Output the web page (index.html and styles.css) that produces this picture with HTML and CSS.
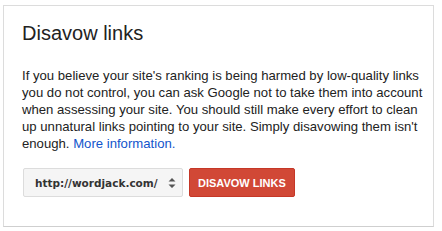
FILE: index.html
```html
<!DOCTYPE html>
<html>
<head>
<meta charset="utf-8">
<link rel="stylesheet" href="styles.css">
</head>
<body>
<div class="card">
  <h1 class="title">Disavow links</h1>
  <p class="desc">If you believe your site's ranking is being harmed by low-quality links you do not control, you can ask Google not to take them into account when assessing your site. You should still make every effort to clean up unnatural links pointing to your site. Simply disavowing them isn't enough. <a class="more" href="#">More information.</a></p>
  <div class="actions">
    <div class="select">
      <span class="select-text">http://wordjack.com/</span>
      <svg class="arrows" width="8" height="12" viewBox="0 0 8 12"><path d="M4 1 L7.5 4.5 L0.5 4.5 Z M4 11 L7.5 7.5 L0.5 7.5 Z" fill="#555"/></svg>
    </div>
    <button class="btn">DISAVOW LINKS</button>
  </div>
</div>
</body>
</html>
```
FILE: styles.css
```css
html, body { margin: 0; padding: 0; background: #fff; }
body { font-family: Arial, "Liberation Sans", sans-serif; color: #222; }
.card {
  margin: 5px 0 0 3px;
  width: 431px;
  height: 222px;
  box-sizing: border-box;
  border: 1px solid #dcdcdc;
  border-bottom-color: #cfcfcf;
  padding: 15px 0 0 18px;
}
.title {
  margin: 0;
  font-size: 20px;
  font-weight: normal;
  line-height: 24px;
  color: #222;
}
.desc {
  margin: 22px 0 0 0;
  font-size: 13.15px;
  line-height: 17px;
  color: #222;
  width: 402px;
}
.more { color: #15c; text-decoration: none; }
.actions { display: flex; align-items: center; gap: 6px; margin-top: 16px; margin-left: 1px; }
.select {
  display: flex; align-items: center; justify-content: space-between;
  width: 160px; height: 29px; box-sizing: border-box;
  padding: 0 6px 0 11px;
  background: #f5f5f5; border: 1px solid #dcdcdc; border-radius: 2px;
}
.select-text { font-family: "DejaVu Sans", sans-serif; font-weight: bold; font-size: 10.5px; color: #333; }
.btn {
  height: 29px; padding: 0 8px; border: 1px solid #c53727; border-radius: 2px;
  background: #d14836; color: #fff; font-family: Arial, "Liberation Sans", sans-serif;
  font-weight: bold; font-size: 11px; box-sizing: border-box; white-space: nowrap;
}
```
